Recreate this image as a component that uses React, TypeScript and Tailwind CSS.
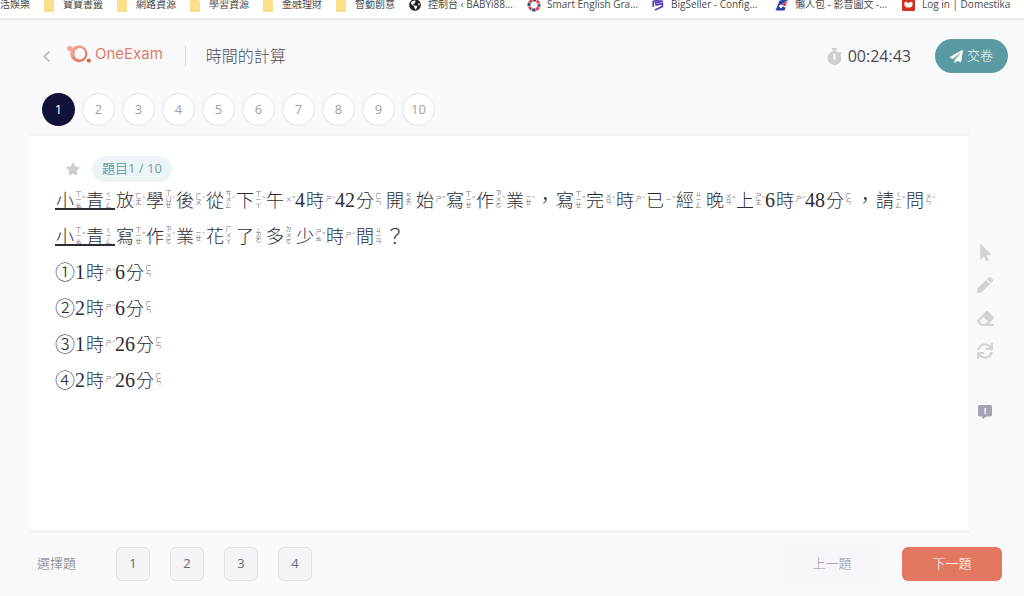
import React, { useState } from "react";
import {
  FaChevronLeft,
  FaCommentAlt,
  FaEraser,
  FaGlobeAmericas,
  FaMousePointer,
  FaPaperPlane,
  FaPen,
  FaStar,
  FaStopwatch,
  FaSync,
} from "react-icons/fa";

type Glyph = { char: string; sound?: string; tone?: string; underline?: boolean };

const READINGS: Record<string, [string, string?]> = {
  小: ["ㄒㄧㄠ", "ˇ"],
  青: ["ㄑㄧㄥ"],
  放: ["ㄈㄤ", "ˋ"],
  學: ["ㄒㄩㄝ", "ˊ"],
  後: ["ㄏㄡ", "ˋ"],
  從: ["ㄘㄨㄥ", "ˊ"],
  下: ["ㄒㄧㄚ", "ˋ"],
  午: ["ㄨ", "ˇ"],
  時: ["ㄕ", "ˊ"],
  分: ["ㄈㄣ"],
  開: ["ㄎㄞ"],
  始: ["ㄕ", "ˇ"],
  寫: ["ㄒㄧㄝ", "ˇ"],
  作: ["ㄗㄨㄛ", "ˋ"],
  業: ["ㄧㄝ", "ˋ"],
  完: ["ㄨㄢ", "ˊ"],
  已: ["ㄧ", "ˇ"],
  經: ["ㄐㄧㄥ"],
  晚: ["ㄨㄢ", "ˇ"],
  上: ["ㄕㄤ", "ˋ"],
  請: ["ㄑㄧㄥ", "ˇ"],
  問: ["ㄨㄣ", "ˋ"],
  花: ["ㄏㄨㄚ"],
  了: ["˙ㄌㄜ"],
  多: ["ㄉㄨㄛ"],
  少: ["ㄕㄠ", "ˇ"],
  間: ["ㄐㄧㄢ"],
};

const QUESTION = "小青放學後從下午4時42分開始寫作業，寫完時已經晚上6時48分，請問小青寫作業花了多少時間？";
const OPTIONS = ["①1時6分", "②2時6分", "③1時26分", "④2時26分"];

function toGlyphs(text: string): Glyph[] {
  return Array.from(text).map((char) => {
    const reading = READINGS[char];
    return {
      char,
      sound: reading?.[0],
      tone: reading?.[1],
      underline: char === "小" || char === "青",
    };
  });
}

function AnnotatedText({ text }: { text: string }) {
  return (
    <>
      {toGlyphs(text).map((g, i) => {
        if (/[0-9]/.test(g.char)) {
          return (
            <span
              key={i}
              className="flex h-9 w-[10px] items-center justify-center font-['Liberation_Serif',serif] text-[20px] font-normal"
            >
              {g.char}
            </span>
          );
        }
        if (!g.sound) {
          return (
            <span key={i} className="flex h-9 w-5 items-center justify-center text-[20px]">
              {g.char}
            </span>
          );
        }
        return (
          <span key={i} className="flex h-9 w-[30px] items-center">
            <span
              className={
                g.underline
                  ? "flex h-5 w-full items-center border-b-2 border-[#2c2c34]"
                  : "flex h-5 w-full items-center border-b-2 border-transparent"
              }
            >
              <span className="w-5 text-center text-[18px] leading-5">{g.char}</span>
              <span className="flex w-[10px] items-center text-[6px] font-normal leading-[6px] text-[#6a6a70]">
                <span className="w-[7px] whitespace-nowrap leading-[7px] [text-orientation:upright] [writing-mode:vertical-rl]">
                  {g.sound}
                </span>
                <span>{g.tone}</span>
              </span>
            </span>
          </span>
        );
      })}
    </>
  );
}

function FolderIcon() {
  return (
    <svg viewBox="0 0 10 14" className="h-[14px] w-[10px]" aria-hidden="true">
      <path d="M0 1h9.4v2H10v10.4H0z" fill="#fbe08a" />
      <path d="M0 12.4h10v1H0z" fill="#f3cf6a" />
    </svg>
  );
}

function RingIcon() {
  return (
    <svg viewBox="0 0 14 14" className="h-[14px] w-[14px]" aria-hidden="true">
      <circle cx="7" cy="7" r="6.6" fill="#fff" />
      <g fill="none" strokeWidth="3">
        <circle cx="7" cy="7" r="5" stroke="#e5484d" strokeDasharray="3.4 4.454" strokeDashoffset="-2.2" />
        <circle cx="7" cy="7" r="5" stroke="#25518f" strokeDasharray="3.4 4.454" strokeDashoffset="1.7" />
      </g>
    </svg>
  );
}

function SellerIcon() {
  return (
    <svg viewBox="0 0 12 13" className="h-[13px] w-3" aria-hidden="true">
      <path
        d="M1.2 9V3.4L10.8 1M3.6 6.2V4.8L11 3.2M3.4 7.2l7-1.6v2.8L3 12"
        fill="none"
        stroke="#5b3fb8"
        strokeWidth="1.7"
      />
    </svg>
  );
}

function PlaneIcon() {
  return (
    <svg viewBox="0 0 14 12" className="h-3 w-[14px]" aria-hidden="true">
      <path d="M4.6 1.6 13.5 0 9.6 11.4H.5z" fill="#2343a5" />
      <path d="m3.6 7 9.4-6-2.6 8-2.4-1.8-2 2.2z" fill="#fff" />
      <path d="m5.6 6 6.4-4-2 5.6-2-1.6z" fill="#d9303c" />
    </svg>
  );
}

function DomestikaIcon() {
  return (
    <svg viewBox="0 0 13 13" className="h-[13px] w-[13px]" aria-hidden="true">
      <rect width="13" height="13" rx="1" fill="#d0331b" />
      <path d="M2.4 4.4 4.6 3.8l1.9 1.4 1.9-1.4 2.2.6v1.8a4.1 3.4 0 0 1-8.2 0z" fill="#fff" />
    </svg>
  );
}

const folders = ["寶寶書籤", "網路資源", "學習資源", "金融理財", "智動創意"];

function Bookmark({ icon, label, className }: { icon: React.ReactNode; label: string; className: string }) {
  return (
    <a href="#" className={`flex shrink-0 items-center whitespace-nowrap ${className}`}>
      {icon}
      <span>{label}</span>
    </a>
  );
}

function BookmarksBar() {
  return (
    <nav
      aria-label="Bookmarks"
      className="h-5 overflow-hidden border-b-2 border-[#e9e9eb] bg-white font-['Open_Sans','Noto_Sans_CJK_TC',sans-serif] text-[10px] text-[#4a4a4a]"
    >
      <div className="flex h-[9px] items-center">
        <a href="#" className="flex w-11 shrink-0 items-center whitespace-nowrap">
          活娛樂
        </a>
        {folders.map((name) => (
          <Bookmark key={name} icon={<FolderIcon />} label={name} className="w-[73px] gap-[9px]" />
        ))}
        <Bookmark icon={<FaGlobeAmericas className="h-3 w-3 text-[#222]" />} label="控制台 ‹ BABYi88..." className="w-[118px] gap-[7px]" />
        <Bookmark icon={<RingIcon />} label="Smart English Gra..." className="w-[125px] gap-[6px]" />
        <Bookmark icon={<SellerIcon />} label="BigSeller - Config..." className="w-[123px] gap-[7px]" />
        <Bookmark icon={<PlaneIcon />} label="懶人包 - 影音圖文 -..." className="w-[127px] gap-[6px]" />
        <Bookmark icon={<DomestikaIcon />} label="Log in | Domestika" className="gap-[7px]" />
      </div>
    </nav>
  );
}

function Logo() {
  return (
    <div className="flex items-center gap-1 pb-1 text-[#dd7d66]">
      <svg viewBox="0 0 24 18" className="h-[18px] w-6" aria-hidden="true">
        <defs>
          <linearGradient id="ring" x1="0" y1="0" x2="1" y2="1">
            <stop offset="0" stopColor="#f4b3a2" />
            <stop offset="1" stopColor="#dc6247" />
          </linearGradient>
        </defs>
        <circle cx="2.9" cy="3.6" r="2.7" fill="#f2a794" />
        <path
          fillRule="evenodd"
          fill="url(#ring)"
          d="M11.8 0.4a8.4 8.4 0 1 1-.01 0zM12.9 3a5.4 5.8 0 1 0 .01 0z"
        />
        <circle cx="21.8" cy="15.6" r="2.1" fill="#dc6247" />
      </svg>
      <span className="font-['Inter',sans-serif] text-[15px] leading-[18px]">OneExam</span>
    </div>
  );
}

const tools = [
  { label: "選取", icon: <FaMousePointer className="h-[17px] w-[17px]" /> },
  { label: "畫筆", icon: <FaPen className="h-4 w-4" /> },
  { label: "橡皮擦", icon: <FaEraser className="h-[17px] w-[17px]" /> },
  { label: "重設", icon: <FaSync className="h-4 w-4" /> },
];

export default function App() {
  const [current, setCurrent] = useState(1);
  return (
    <div className="flex min-h-screen flex-col bg-[#f9f9fc] font-['Open_Sans','Noto_Sans_CJK_TC',sans-serif] text-[#4b4b54]">
      <BookmarksBar />
      <header className="flex h-[72px] items-center pl-[42px] pr-4">
        <button type="button" aria-label="返回" className="mr-4 text-[#c4c4c8]">
          <FaChevronLeft className="h-[13px] w-[9px]" />
        </button>
        <Logo />
        <span className="ml-[22px] h-5 w-px bg-[#dcdce0]" />
        <h1 className="ml-5 flex-1 text-[16px] font-light">時間的計算</h1>
        <FaStopwatch className="h-[17px] w-[15px] text-[#cfcfd3]" />
        <time className="ml-[6px] text-[16px]">00:24:43</time>
        <button
          type="button"
          className="ml-6 flex h-[34px] w-[73px] items-center justify-center gap-1 rounded-full bg-[#5a9aa3] text-[13px] font-light text-white"
        >
          <FaPaperPlane className="h-[13px] w-[13px]" />
          交卷
        </button>
      </header>

      <nav aria-label="題號" className="flex h-[41px] gap-[7px] pl-[42px] pt-px">
        {Array.from({ length: 10 }, (_, i) => i + 1).map((n) => (
          <button
            key={n}
            type="button"
            onClick={() => setCurrent(n)}
            className={
              n === current
                ? "h-[33px] w-[33px] rounded-full bg-[#12113a] text-[13px] text-white"
                : "h-[33px] w-[33px] rounded-full border border-[#e2e2e6] bg-white text-[13px] text-[#a0a0a4]"
            }
          >
            {n}
          </button>
        ))}
      </nav>

      <div className="flex flex-1">
        <main className="ml-[29px] flex-1 border-y-[3px] border-[#f2f2f5] bg-white pl-[26px] pr-8 pt-5">
          <div className="flex h-[26px] items-center gap-3 pl-[11px]">
            <FaStar className="h-[14px] w-[14px] text-[#cdcdd1]" />
            <span className="flex h-[26px] items-center rounded-full bg-[#ecf4f5] px-[10px] text-[13px] text-[#6ea0a8]">
              題目1 / 10
            </span>
          </div>
          <div className="font-['Noto_Sans_CJK_TC',sans-serif] font-light text-[#2c2c34]">
            <p className="flex flex-wrap">
              <AnnotatedText text={QUESTION} />
            </p>
            {OPTIONS.map((o) => (
              <p key={o} className="flex">
                <AnnotatedText text={o} />
              </p>
            ))}
          </div>
        </main>
        <aside className="flex w-[55px] flex-col items-center pr-[23px] pt-[110px]">
          <div className="flex flex-col gap-[15px]">
            {tools.map((t) => (
              <button key={t.label} type="button" aria-label={t.label} className="flex h-[18px] w-[18px] items-center justify-center text-[#d2d2d7]">
                {t.icon}
              </button>
            ))}
          </div>
          <button type="button" aria-label="回報問題" className="relative mt-[45px] flex text-[#a3a3b2]">
            <FaCommentAlt className="h-[14px] w-[14px]" />
            <span className="absolute inset-x-0 top-0 text-center text-[9px] font-bold leading-[11px] text-white">!</span>
          </button>
        </aside>
      </div>

      <footer className="flex h-[63px] items-center pb-px pl-[37px] pr-[22px] text-[13px]">
        <span className="w-[79px] font-light text-[#777780]">選擇題</span>
        <div className="flex flex-1 gap-5">
          {[1, 2, 3, 4].map((n) => (
            <button key={n} type="button" className="h-[34px] w-[34px] rounded-md border border-[#e1e1e6] bg-[#f3f3f8] text-[13px] text-[#6b6b74]">
              {n}
            </button>
          ))}
        </div>
        <button type="button" className="h-[34px] w-[100px] rounded-md bg-[#f5f5fa] font-light text-[#95959c]">
          上一題
        </button>
        <button type="button" className="ml-5 h-[34px] w-[100px] rounded-md bg-[#e2785f] font-light text-white">
          下一題
        </button>
      </footer>
    </div>
  );
}
